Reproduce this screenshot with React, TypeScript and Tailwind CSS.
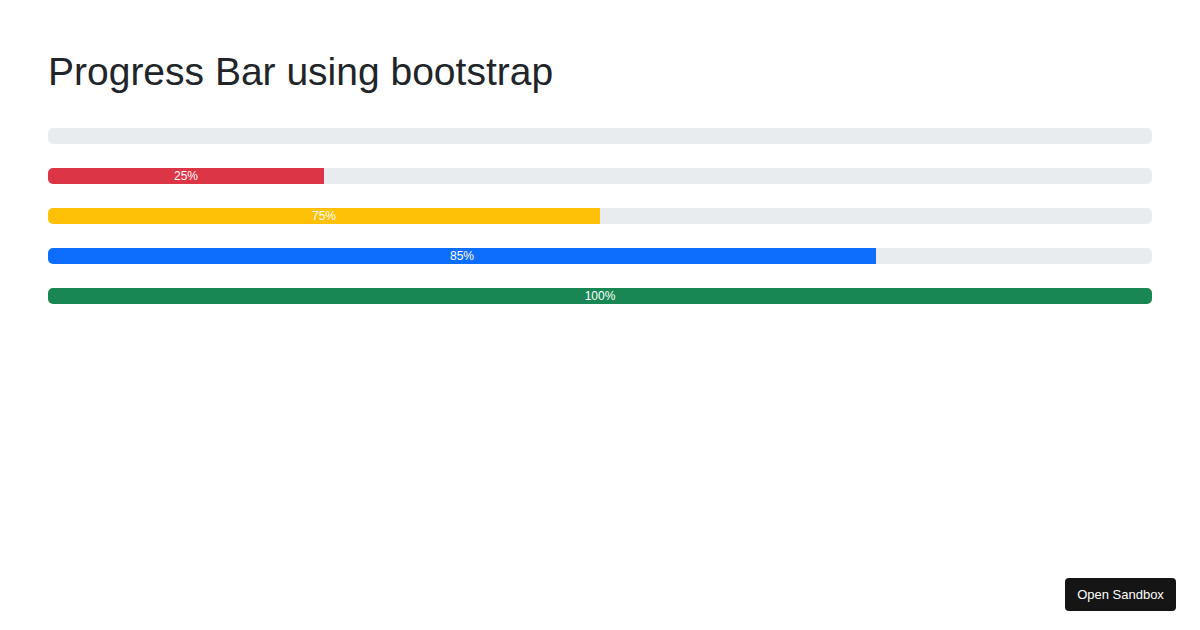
const bars = [
    { label: '', width: 0, color: 'bg-[#dc3545]' },
    { label: '25%', width: 25, color: 'bg-[#dc3545]' },
    { label: '75%', width: 50, color: 'bg-[#ffc107]' },
    { label: '85%', width: 75, color: 'bg-[#0d6efd]' },
    { label: '100%', width: 100, color: 'bg-[#198754]' },
]

function ProgressBar({ label, width, color }: { label: string, width: number, color: string }) {
    return (
        <div className="flex h-4 w-full overflow-hidden rounded-[5px] bg-[#e9ecef] text-[12px]">
            {width > 0 && (
                <div className={`flex flex-col justify-center text-center leading-none text-white ${color}`} style={{ width: `${width}%` }}>
                    {label}
                </div>
            )}
        </div>
    )
}

export default function App() {
    return (
        <div className="relative min-h-[630px] bg-white p-12 text-[#212529]" style={{ fontFamily: '"Liberation Sans", Arial, sans-serif' }}>
            <h1 className="mb-8 text-[39px] font-normal leading-[48px]">Progress Bar using bootstrap</h1>
            <div className="flex flex-col gap-6">
                {bars.map((bar, i) => (
                    <ProgressBar key={i} {...bar} />
                ))}
            </div>
            <button className="fixed bottom-[19px] right-[24px] h-[33px] w-[111px] rounded-[4px] bg-[#151515] text-[13px] text-white">
                Open Sandbox
            </button>
        </div>
    )
}
